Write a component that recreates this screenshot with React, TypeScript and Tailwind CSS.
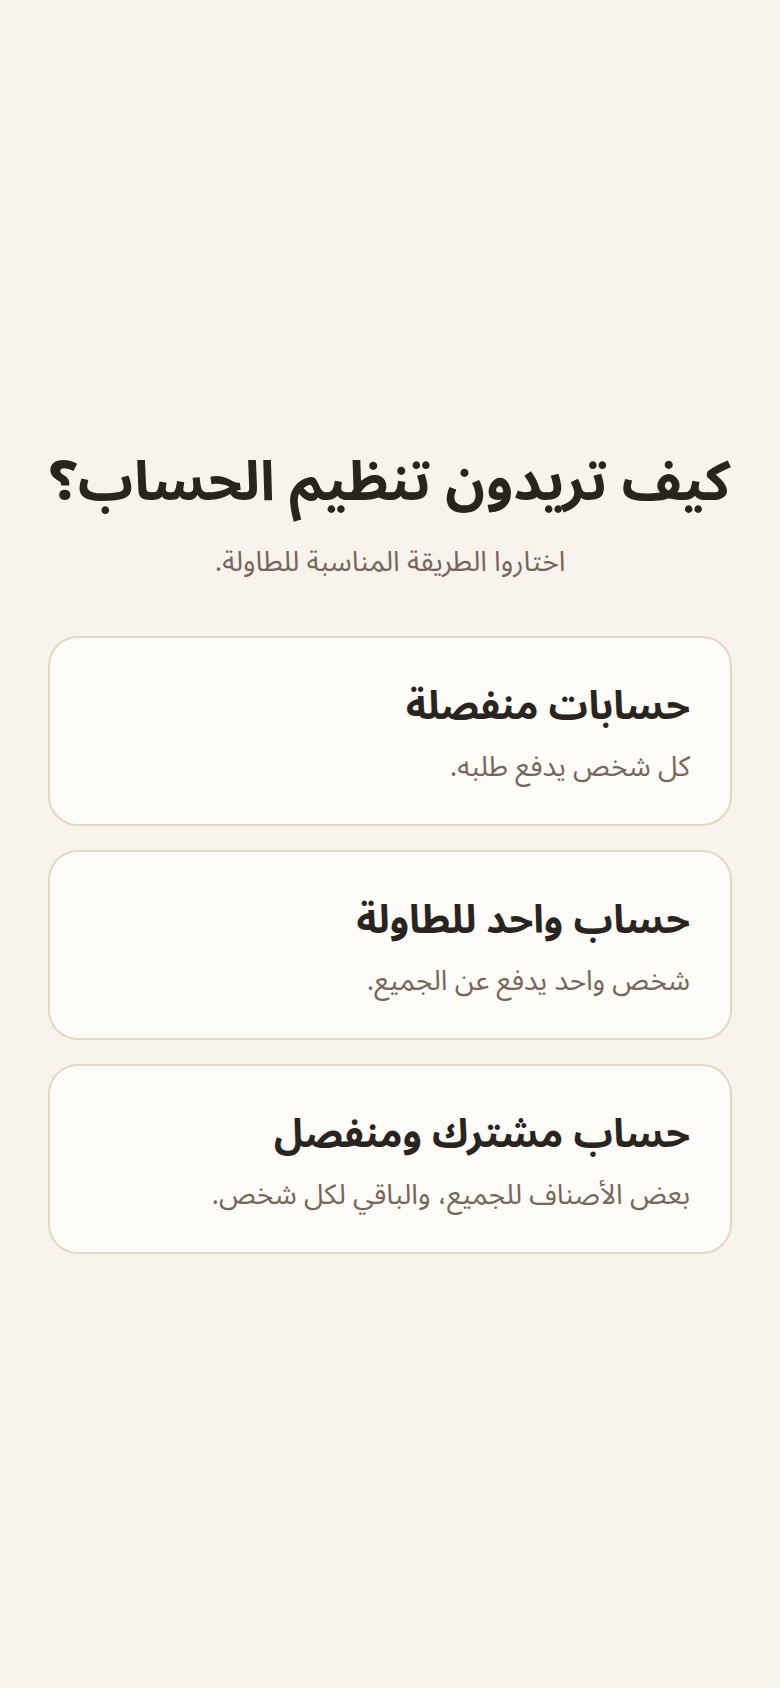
const options = [
  { title: "حسابات منفصلة", desc: "كل شخص يدفع طلبه." },
  { title: "حساب واحد للطاولة", desc: "شخص واحد يدفع عن الجميع." },
  { title: "حساب مشترك ومنفصل", desc: "بعض الأصناف للجميع، والباقي لكل شخص." },
];

export default function App() {
  return (
    <div
      dir="rtl"
      className="min-h-screen bg-[#f8f3ec] flex flex-col justify-center px-12 pt-[15px]"
      style={{ fontFamily: '"Noto Sans Arabic", "DejaVu Sans", sans-serif' }}
    >
      <h1 className="text-center whitespace-nowrap text-[55px] font-bold text-[#2a241f] leading-tight">
        كيف تريدون تنظيم الحساب؟
      </h1>
      <p className="mt-6 text-center text-[28px] text-[#75675b]">
        اختاروا الطريقة المناسبة للطاولة.
      </p>

      {/* options */}
      <div className="mt-[52px] flex flex-col gap-6">
        {options.map((o) => (
          <button
            key={o.title}
            className="text-right bg-[#fdfbf8] border-2 border-[#e3d8c6] rounded-[30px] px-10 pt-[10px] h-[190px] flex flex-col justify-center"
          >
            <div className="text-[39px] font-bold text-[#2a241f] leading-tight">
              {o.title}
            </div>
            <div className="mt-4 text-[28px] text-[#75675b]">{o.desc}</div>
          </button>
        ))}
      </div>
    </div>
  );
}
